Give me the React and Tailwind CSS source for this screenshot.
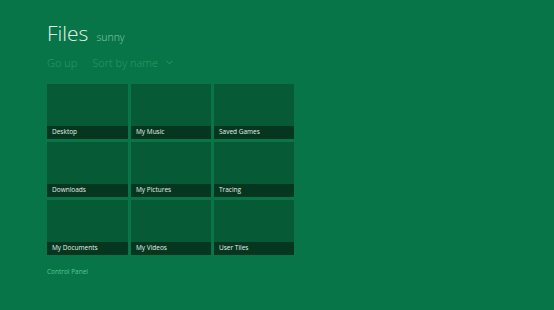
import React from 'react'

const folders = [
  'Desktop', 'My Music', 'Saved Games',
  'Downloads', 'My Pictures', 'Tracing',
  'My Documents', 'My Videos', 'User Tiles',
]

function Tile({ name }) {
  return (
    <div className="h-[55px] bg-[#065a35] flex flex-col justify-end">
      <div className="h-[13px] bg-[#05361f] flex items-center pl-[5px] text-[6.5px] text-[#e6efe9] leading-none">
        {name}
      </div>
    </div>
  )
}

export default function App() {
  return (
    <div className="w-[554px] h-[310px] bg-[#087548] overflow-hidden pl-[47px] pt-[23px]" style={{ fontFamily: '"Open Sans", "Noto Sans", sans-serif' }}>
      <div className="flex items-baseline gap-[8px] h-[21px]">
        <span className="text-[21px] leading-none font-light text-[#e2f3e8]">Files</span>
        <span className="text-[10.5px] leading-none font-light text-[#8ccaa8]">sunny</span>
      </div>
      <div className="flex items-center mt-[13px] text-[11px] font-light text-[#2a9c63] leading-none">
        <span>Go up</span>
        <span className="ml-[15px]">Sort by name</span>
        <svg className="ml-[8px]" width="7" height="5" viewBox="0 0 7 5" fill="none">
          <path d="M0.5 0.8L3.5 3.8L6.5 0.8" stroke="#2a9c63" strokeWidth="1" />
        </svg>
      </div>
      <div className="grid grid-cols-[81px_80px_80px] gap-[3px] mt-[16px]">
        {folders.map((f) => (
          <Tile key={f} name={f} />
        ))}
      </div>
      <div className="mt-[14px] text-[6.5px] text-[#5cc48f] leading-none">Control Panel</div>
    </div>
  )
}
